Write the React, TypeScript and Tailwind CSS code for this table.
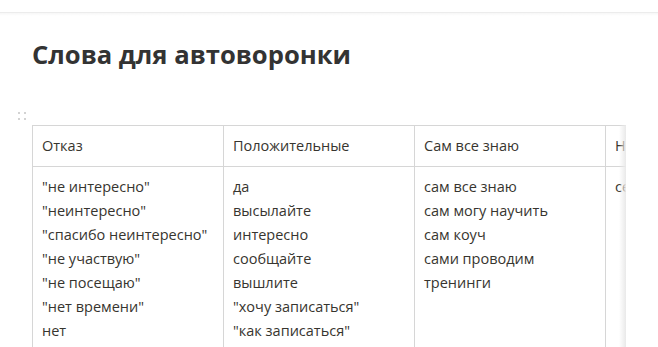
const columns = [
  {
    title: "Отказ",
    items: [
      '"не интересно"',
      '"неинтересно"',
      '"спасибо неинтересно"',
      '"не участвую"',
      '"не посещаю"',
      '"нет времени"',
      "нет",
    ],
  },
  {
    title: "Положительные",
    items: [
      "да",
      "высылайте",
      "интересно",
      "сообщайте",
      "вышлите",
      '"хочу записаться"',
      '"как записаться"',
    ],
  },
  {
    title: "Сам все знаю",
    items: ["сам все знаю", "сам могу научить", "сам коуч", "сами проводим", "тренинги"],
  },
  {
    title: "Не актуально",
    items: ["сейчас не актуально"],
  },
];

const App = () => {
  return (
    <div
      className="w-[658px] h-[347px] overflow-hidden bg-white text-[#37352f]"
      style={{ fontFamily: '"Open Sans", "Noto Sans", sans-serif' }}
    >
      <div className="h-3" />
      <div className="h-px bg-[#ececec]" />
      <div className="h-[3px] bg-gradient-to-b from-[#f7f7f7] to-white" />

      <h1 className="pl-8 pt-[22px] text-[25.6px] leading-[34px] font-bold text-[#333]">
        Слова для автоворонки
      </h1>

      <div className="flex mt-[37px]">
        <div className="w-8 shrink-0 pl-[18px] pt-[3px]">
          <div className="grid grid-cols-2 gap-[4px] w-[8px]">
            <span className="w-[2px] h-[2px] bg-[#c4c4c4] rounded-full" />
            <span className="w-[2px] h-[2px] bg-[#c4c4c4] rounded-full" />
            <span className="w-[2px] h-[2px] bg-[#c4c4c4] rounded-full" />
            <span className="w-[2px] h-[2px] bg-[#c4c4c4] rounded-full" />
          </div>
        </div>

        <div className="relative w-[594px] overflow-hidden mt-[16px]">
          <table className="border-collapse table-fixed w-[764px]">
            <thead>
              <tr>
                {columns.map((col) => (
                  <th
                    key={col.title}
                    className="w-[191px] border border-[#d6d6d6] px-[9px] pt-[8px] pb-[8px] text-left font-normal text-[14.5px] leading-6 whitespace-nowrap"
                  >
                    {col.title}
                  </th>
                ))}
              </tr>
            </thead>
            <tbody>
              <tr>
                {columns.map((col) => (
                  <td
                    key={col.title}
                    className="border border-[#d6d6d6] px-[9px] pt-[8px] pb-[8px] align-top text-[14.5px] leading-6 whitespace-nowrap"
                  >
                    {col.items.map((item) => (
                      <div key={item}>{item}</div>
                    ))}
                  </td>
                ))}
              </tr>
            </tbody>
          </table>
          <div className="absolute top-0 right-0 h-full w-[7px] bg-gradient-to-r from-transparent to-[#e9e9e9]" />
        </div>
      </div>
    </div>
  );
};

export default App;
